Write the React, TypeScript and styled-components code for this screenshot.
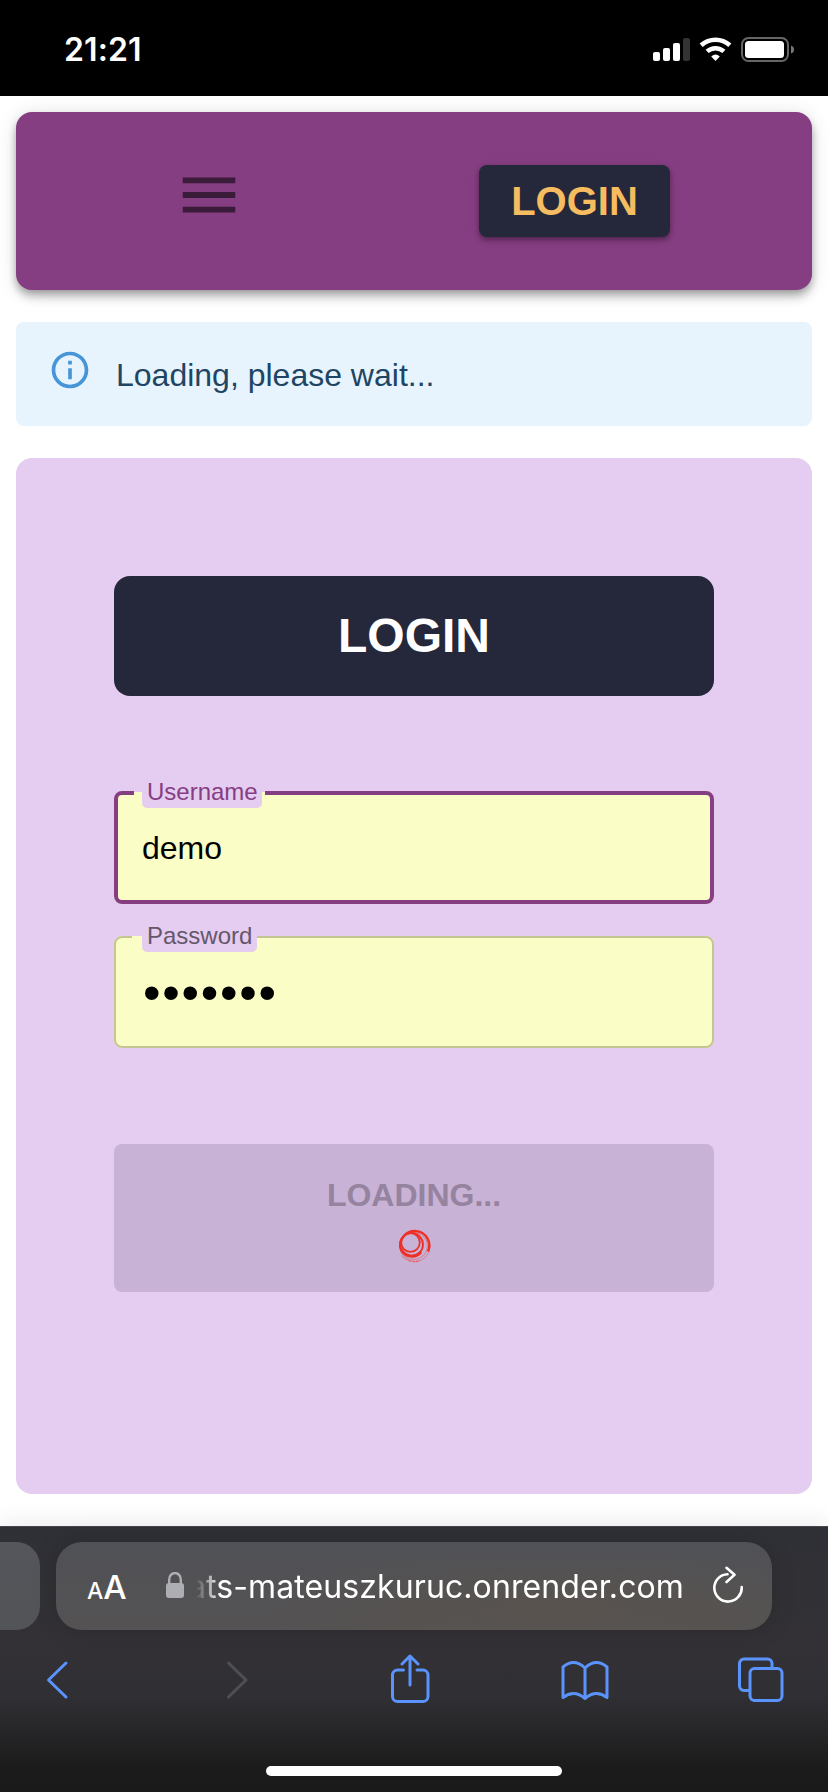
import React from "react";
import styled, { createGlobalStyle } from "styled-components";

const GlobalStyle = createGlobalStyle`
  * { box-sizing: border-box; }
  body { margin: 0; background: #fff; }
`;

const sans = `"Liberation Sans", Helvetica, Arial, sans-serif`;
const system = `Inter, Roboto, sans-serif`;

const Screen = styled.div`
  width: 828px;
  height: 1792px;
  display: flex;
  flex-direction: column;
  background: #fff;
  font-family: ${sans};
  overflow: hidden;
`;

const StatusBar = styled.div`
  height: 96px;
  flex: none;
  background: #000;
  display: flex;
  justify-content: space-between;
  padding: 0 34px 0 64px;
`;

const Clock = styled.time`
  font: 600 32px/40px ${system};
  letter-spacing: 0.1px;
  color: #fff;
  margin-top: 30px;
`;

const StatusIcons = styled.svg`
  width: 142px;
  height: 26px;
  margin-top: 37px;
`;

const Page = styled.main`
  flex: 1;
  display: flex;
  flex-direction: column;
  gap: 32px;
  padding: 16px 16px 32px;
`;

const Header = styled.header`
  height: 178px;
  flex: none;
  display: flex;
  justify-content: space-between;
  align-items: flex-start;
  padding: 48px 142px 0 158px;
  border-radius: 16px;
  background: #863e82;
  box-shadow: 0 4px 8px -2px rgba(0, 0, 0, 0.3), 0 8px 10px rgba(0, 0, 0, 0.14),
    0 2px 20px rgba(0, 0, 0, 0.12);
`;

const MenuIcon = styled.svg`
  width: 70px;
  height: 70px;
  fill: #3b1b3a;
`;

const HeaderButton = styled.button`
  width: 191px;
  height: 72px;
  margin-top: 5px;
  padding: 0;
  border: 0;
  border-radius: 8px;
  background: #25283b;
  color: #f6bd60;
  font: 700 40px/72px ${sans};
  box-shadow: 0 3px 5px rgba(0, 0, 0, 0.3), 0 2px 10px rgba(0, 0, 0, 0.14);
`;

const Alert = styled.div`
  height: 104px;
  flex: none;
  display: flex;
  gap: 24px;
  padding: 26px 32px;
  border-radius: 8px;
  background: #e7f4fd;
  color: #1e4563;
  font-size: 32px;
  line-height: 54px;
`;

const InfoIcon = styled.svg`
  width: 44px;
  height: 44px;
  fill: #4695d6;
`;

const Card = styled.form`
  height: 1036px;
  flex: none;
  display: flex;
  flex-direction: column;
  padding: 118px 98px 0;
  border-radius: 16px;
  background: #e5ccf1;
`;

const Title = styled.h1`
  margin: 0 0 96px;
  height: 120px;
  border-radius: 16px;
  background: #25283b;
  color: #fff;
  text-align: center;
  font-size: 48px;
  line-height: 119px;
`;

const Field = styled.div<{ $focused?: boolean }>`
  position: relative;
  height: 112px;
  margin-bottom: 32px;
  border-radius: 8px;
  background: #fafdc5;
  &::before {
    content: "";
    position: absolute;
    inset: ${(p) => (p.$focused ? "-1px 0 0" : "0")};
    border: ${(p) => (p.$focused ? "4px solid #863e82" : "2px solid #c3c593")};
    border-radius: 8px;
  }
`;

const Notch = styled.span<{ $left: number; $width: number }>`
  position: absolute;
  top: 0;
  left: ${(p) => p.$left}px;
  width: ${(p) => p.$width}px;
  height: 6px;
  background: #fafdc5;
  box-shadow: 0 -3px 0 #e5ccf1;
`;

const Label = styled.label<{ $focused?: boolean; $width: number }>`
  position: absolute;
  top: -16px;
  left: 28px;
  width: ${(p) => p.$width}px;
  height: 32px;
  padding-left: 5px;
  border-radius: 5px;
  background: #e5ccf1;
  color: ${(p) => (p.$focused ? "#863e82" : "#65576b")};
  font-size: 24px;
  line-height: 31px;
  white-space: nowrap;
`;

const Value = styled.div`
  position: relative;
  padding-left: 28px;
  color: #000;
  font-size: 32px;
  line-height: 113px;
`;

const Secret = styled(Value)`
  padding-left: 29px;
  font-size: 50px;
  line-height: 115px;
  letter-spacing: 1.75px;
`;

const Submit = styled.button`
  height: 148px;
  margin-top: 64px;
  padding: 30px 0 0;
  border: 0;
  border-radius: 8px;
  background: #c8b2d5;
  color: #95839f;
  display: flex;
  flex-direction: column;
  align-items: center;
  font: 700 32px/42px ${sans};
`;

const Spinner = styled.svg`
  width: 36px;
  height: 36px;
  margin: 12px 0 0 2px;
  fill: none;
  stroke: #ee3026;
`;

const BrowserBar = styled.footer`
  position: relative;
  height: 266px;
  flex: none;
  display: flex;
  flex-direction: column;
  padding-top: 16px;
  border-top: 1px solid #47474b;
  background: linear-gradient(
    #2f3036 0,
    #333135 118px,
    #302f34 170px,
    #262628 205px,
    #1b1b1b 242px,
    #191919 100%
  );
  box-shadow: 0 -4px 22px rgba(0, 0, 0, 0.08);
`;

const Tabs = styled.div`
  display: flex;
  gap: 16px;
  height: 88px;
  margin-top: -1px;
`;

const PreviousTab = styled.div`
  width: 40px;
  border-radius: 0 24px 24px 0;
  background: linear-gradient(#55565c, #535457);
`;

const AddressBar = styled.div`
  width: 716px;
  display: flex;
  align-items: center;
  border-radius: 26px;
  background: radial-gradient(
      ellipse 300px 60px at 70% 75%,
      rgba(91, 84, 76, 0.7),
      transparent
    ),
    linear-gradient(#505156, #545253);
  box-shadow: 0 0 24px rgba(0, 0, 0, 0.15);
  color: #fff;
  font-family: ${system};
`;

const TextSize = styled.div`
  width: 76px;
  padding: 5px 0 0 31px;
  white-space: nowrap;
  font-size: 23px;
  font-weight: 500;
  line-height: 40px;
  span { font-size: 33px; }
`;

const LockIcon = styled.svg`
  width: 18px;
  height: 26px;
  margin: -2px 0 0 34px;
  fill: #adadb4;
`;

const Url = styled.div`
  width: 500px;
  padding-top: 1px;
  display: flex;
  justify-content: flex-end;
  white-space: nowrap;
  font-size: 32px;
  line-height: 44px;
  letter-spacing: 0.1px;
  mask-image: linear-gradient(to right, transparent 12px, #000 36px);
`;

const ReloadIcon = styled.svg`
  width: 32px;
  height: 38px;
  margin: -2px 0 0 28px;
  fill: none;
  stroke: #fff;
  stroke-width: 2.6;
  stroke-linecap: round;
  stroke-linejoin: round;
`;

const Toolbar = styled.nav`
  display: flex;
  justify-content: space-between;
  padding: 24px 42px 0 32px;
`;

const ToolIcon = styled.svg<{ $muted?: boolean }>`
  width: 50px;
  height: 52px;
  fill: none;
  stroke: ${(p) => (p.$muted ? "#505053" : "#5a93fb")};
  stroke-width: 3;
  stroke-linecap: round;
  stroke-linejoin: round;
`;

const HomeIndicator = styled.div`
  width: 296px;
  height: 10px;
  margin: 60px 0 0 266px;
  border-radius: 5px;
  background: #fff;
`;

export default function App() {
  return (
    <Screen>
      <GlobalStyle />
      <StatusBar>
        <Clock>21:21</Clock>
        <StatusIcons viewBox="0 0 142 26">
          <g fill="#fff">
            <rect x="1" y="15" width="7" height="9" rx="2" />
            <rect x="11" y="11" width="7" height="13" rx="2" />
            <rect x="21" y="6" width="7" height="18" rx="2" />
            <rect x="31" y="1" width="7" height="23" rx="2" fill="#333" />
            <path d="M63.5 24 59.2 19.6Q63.5 15.6 67.8 19.6Z" />
            <rect x="93" y="4" width="39" height="17" rx="3.5" />
          </g>
          <g fill="none" stroke="#fff" strokeWidth="4.6">
            <path d="M49.2 8.3A21 21 0 0 1 77.800 8.300" />
            <path d="M55.100 14.400A12.600 12.600 0 0 1 71.900 14.400" />
          </g>
          <rect x="90" y="1" width="46" height="23" rx="6.5" fill="none" stroke="#666" strokeWidth="2" />
          <path d="M139 8.5Q142 9.5 142 12.5T139 16.5Z" fill="#777" />
        </StatusIcons>
      </StatusBar>

      <Page>
        <Header>
          <MenuIcon viewBox="0 0 24 24">
            <path d="M3 18h18v-2H3v2zm0-5h18v-2H3v2zm0-7v2h18V6H3z" />
          </MenuIcon>
          <HeaderButton>LOGIN</HeaderButton>
        </Header>

        <Alert role="alert">
          <InfoIcon viewBox="0 0 24 24">
            <path d="M11 7h2v2h-2zm0 4h2v6h-2zm1-9C6.48 2 2 6.48 2 12s4.48 10 10 10 10-4.48 10-10S17.52 2 12 2zm0 18c-4.41 0-8-3.59-8-8s3.59-8 8-8 8 3.59 8 8-3.59 8-8 8z" />
          </InfoIcon>
          <span>Loading, please wait...</span>
        </Alert>

        <Card>
          <Title>LOGIN</Title>
          <Field $focused>
            <Notch $left={20} $width={131} />
            <Label $focused $width={120}>Username</Label>
            <Value>demo</Value>
          </Field>
          <Field>
            <Notch $left={18} $width={125} />
            <Label $width={115}>Password</Label>
            <Secret>•••••••</Secret>
          </Field>
          <Submit type="button">
            LOADING...
            <Spinner viewBox="0 0 36 36">
              <circle cx="18" cy="18.500" r="15" strokeWidth="1" opacity="0.400" />
              <circle cx="17" cy="18" r="13.500" strokeWidth="0.800" opacity="0.500" />
              <path d="M3.500 20A14.500 14.500 0 1 1 31 23.500" strokeWidth="2.400" />
              <circle cx="13.500" cy="14.500" r="9.300" strokeWidth="1.800" />
              <circle cx="14.500" cy="16.500" r="11.500" strokeWidth="1.800" />
              <path d="M3.600 20A12 12 0 0 0 24 24" strokeWidth="3" />
              <path d="M4.500 28Q13 36 23 33" strokeWidth="1" strokeDasharray="3 1" opacity="0.500" />
            </Spinner>
          </Submit>
        </Card>
      </Page>

      <BrowserBar>
        <Tabs>
          <PreviousTab />
          <AddressBar>
            <TextSize>A<span>A</span></TextSize>
            <LockIcon viewBox="0 0 18 26">
              <rect y="11" width="18" height="15" rx="3" />
              <path d="M3.2 12V7.5a5.8 6.5 0 0 1 11.6 0V12" fill="none" stroke="#adadb4" strokeWidth="2.4" />
            </LockIcon>
            <Url>ats-mateuszkuruc.onrender.com</Url>
            <ReloadIcon viewBox="0 0 32 38">
              <path d="M15.500 8.200A13.700 13.700 0 1 0 29.700 21M14.500 1.800 22.500 8.800 14.500 16" />
            </ReloadIcon>
          </AddressBar>
        </Tabs>
        <Toolbar>
          <ToolIcon viewBox="0 0 26 52">
            <path d="M22 9 4.500 26 22 43" />
          </ToolIcon>
          <ToolIcon $muted viewBox="-4.5 0 26 52">
            <path d="M4 9 21.500 26 4 43" />
          </ToolIcon>
          <ToolIcon viewBox="-1 0 42 52">
            <path d="M14.500 16H8.500A5 5 0 0 0 3.500 21V42.500A5 5 0 0 0 8.500 47.500H34A5 5 0 0 0 39 42.500V21A5 5 0 0 0 34 16H28M21 31V2M13 10 21 2 29 10" />
          </ToolIcon>
          <ToolIcon viewBox="0 0 50 52">
            <path d="M25 14Q14 3.500 3 13V43.500Q14 35 25 44.500Q36 35 47 43.500V13Q36 3.500 25 14V44.500" />
          </ToolIcon>
          <ToolIcon viewBox="0 0 48 52">
            <rect x="13" y="14.500" width="32" height="32" rx="4.500" />
            <path d="M35 14V9.500A4.500 4.500 0 0 0 30.500 5H7A4.500 4.500 0 0 0 2.500 9.500V32A4.500 4.500 0 0 0 7 36.500H12" />
          </ToolIcon>
        </Toolbar>
        <HomeIndicator />
      </BrowserBar>
    </Screen>
  );
}
